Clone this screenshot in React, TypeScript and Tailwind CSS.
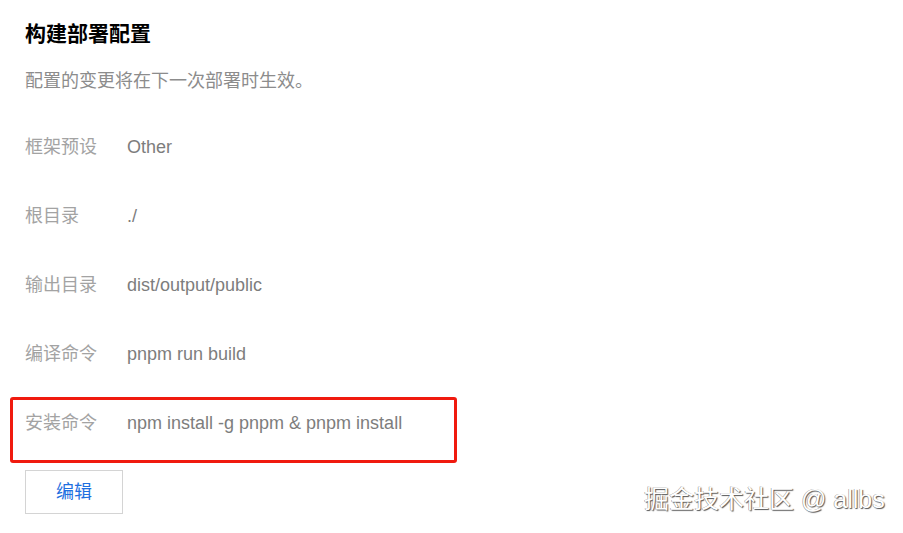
import React from "react";

const rows: [string, string][] = [
  ["框架预设", "Other"],
  ["根目录", "./"],
  ["输出目录", "dist/output/public"],
  ["编译命令", "pnpm run build"],
  ["安装命令", "npm install -g pnpm & pnpm install"],
];

export default function App() {
  return (
    <div
      className="relative w-[903px] h-[533px] bg-white overflow-hidden"
      style={{ fontFamily: '"Liberation Sans", "Noto Sans CJK SC", sans-serif' }}
    >
      <div className="pl-[25px] pt-[20px] flex flex-col">
        <div className="text-[21px] leading-[28px] font-bold text-black">构建部署配置</div>
        <div className="mt-[19px] text-[18px] leading-[28px] text-[#8c8c8c]">
          配置的变更将在下一次部署时生效。
        </div>
        <div className="mt-[18px] flex flex-col">
          {rows.map(([k, v]) => (
            <div key={k} className="h-[69px] flex items-center text-[18px]">
              <span className="w-[102px] text-[#a3a3a3]">{k}</span>
              <span className="text-[#7d7d7d]">{v}</span>
            </div>
          ))}
        </div>
        <button className="mt-[12px] w-[98px] h-[44px] border border-[#d4d4d4] bg-white text-[#1e6fe0] text-[18px] flex items-center justify-center">
          编辑
        </button>
      </div>
      <div className="absolute left-[10px] top-[397px] w-[447px] h-[66px] border-[3px] border-[#f01a0f] rounded-[3px]" />
      <div
        className="absolute left-[644px] top-[483px] text-[25px] leading-[32px] text-white"
        style={{ textShadow: "1px 1px 1px #555, -0.5px -0.5px 0.5px #888" }}
      >
        掘金技术社区 @ allbs
      </div>
    </div>
  );
}
